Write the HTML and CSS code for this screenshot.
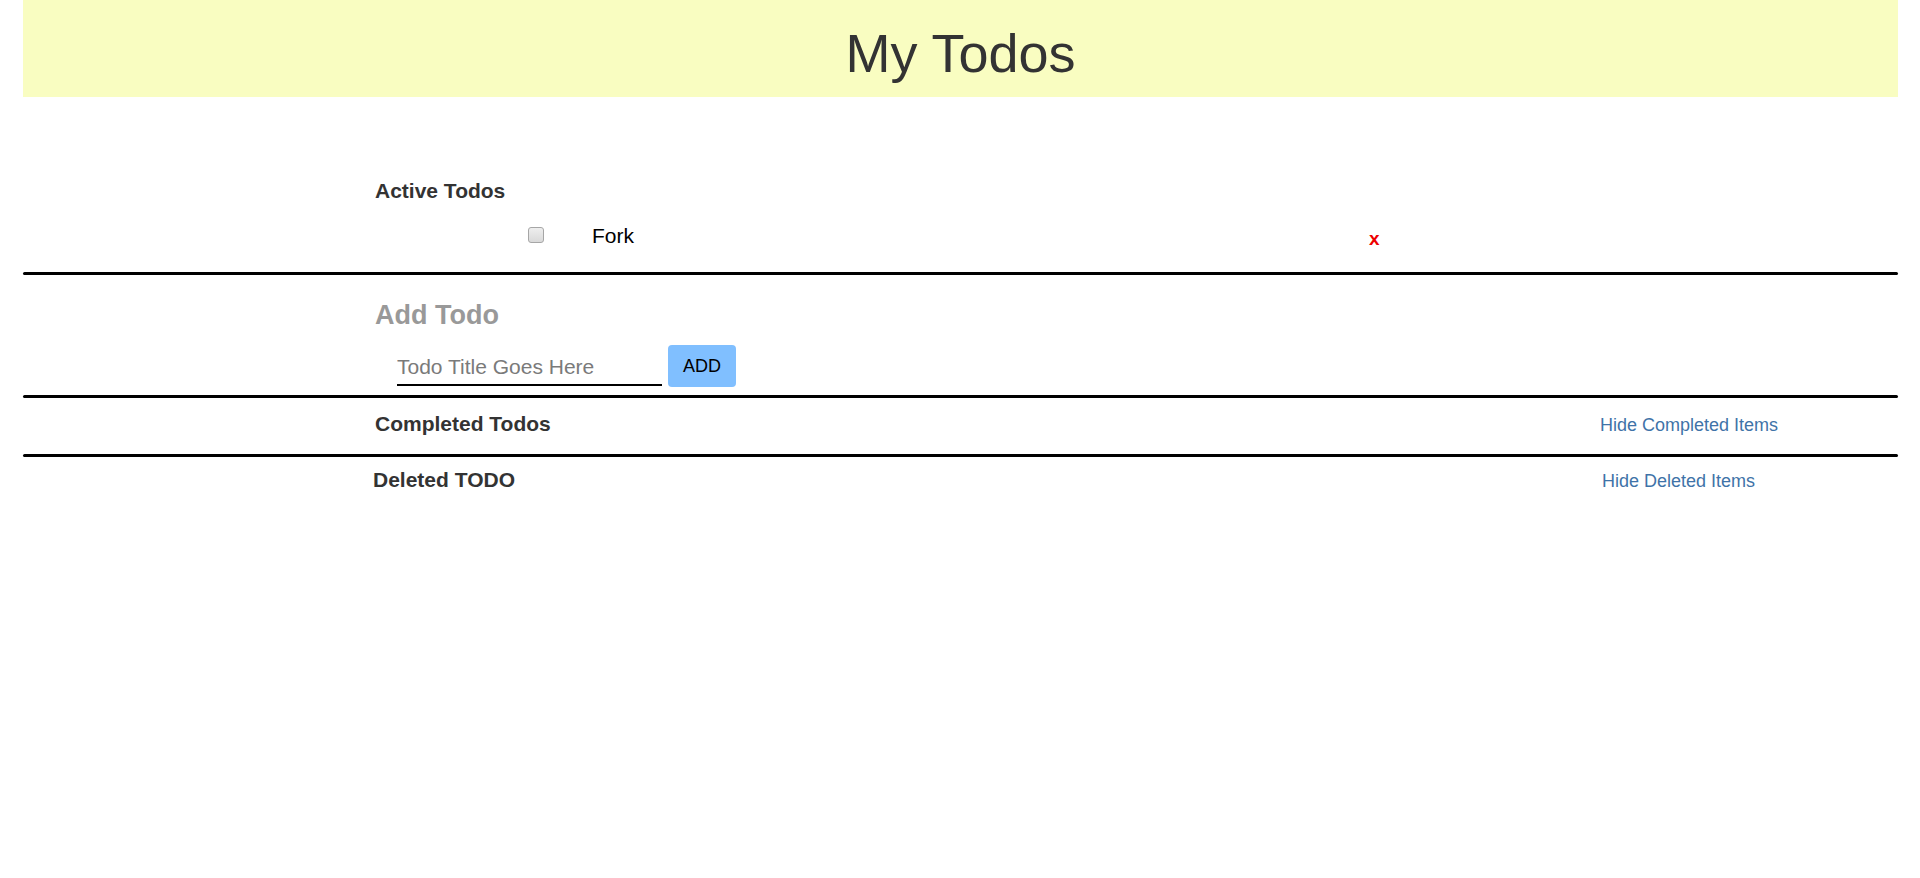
FILE: index.html
```html
<!DOCTYPE html>
<html lang="en">
<head>
<meta charset="utf-8">
<title>My Todos</title>
<link rel="stylesheet" href="styles.css">
</head>
<body>
<div class="page">
  <header class="banner">
    <h1 class="banner-title">My Todos</h1>
  </header>

  <section class="section section-active">
    <h4 class="section-title">Active Todos</h4>
    <div class="todo-row">
      <input type="checkbox" class="todo-check">
      <span class="todo-text">Fork</span>
      <span class="todo-delete">x</span>
    </div>
  </section>

  <div class="rule"></div>

  <section class="section section-add">
    <h3 class="add-title">Add Todo</h3>
    <form class="add-form">
      <input type="text" class="add-input" placeholder="Todo Title Goes Here">
      <button type="button" class="add-button">ADD</button>
    </form>
  </section>

  <div class="rule"></div>

  <section class="section section-completed">
    <div class="split-row">
      <h4 class="section-title">Completed Todos</h4>
      <a class="toggle-link" href="#">Hide Completed Items</a>
    </div>
  </section>

  <div class="rule"></div>

  <section class="section section-deleted">
    <div class="split-row split-row-deleted">
      <h4 class="section-title">Deleted TODO</h4>
      <a class="toggle-link" href="#">Hide Deleted Items</a>
    </div>
  </section>
</div>
</body>
</html>
```

FILE: styles.css
```css
* {
  box-sizing: border-box;
}

html, body {
  margin: 0;
  padding: 0;
  background: #ffffff;
}

body {
  font-family: "Liberation Sans", Arial, sans-serif;
  color: #333333;
}

.page {
  padding: 0 22px 0 23px;
}

.banner {
  background: #f9fdc1;
  height: 97px;
  padding-top: 10px;
  text-align: center;
}

.banner-title {
  margin: 0;
  font-size: 54px;
  line-height: 87px;
  font-weight: 400;
  color: #333333;
}

.section {
  padding-left: 352px;
}

.section-title {
  margin: 0;
  font-size: 21px;
  line-height: 24px;
  font-weight: 700;
  color: #333333;
}

.section-active {
  padding-top: 82px;
  padding-bottom: 24px;
}

.todo-row {
  display: flex;
  align-items: flex-start;
  margin-top: 21px;
  height: 24px;
}

.todo-check {
  appearance: none;
  -webkit-appearance: none;
  width: 16px;
  height: 16px;
  margin: 3px 0 0 153px;
  border: 1px solid #a6a6a6;
  border-radius: 3px;
  background: linear-gradient(#eeeeee, #d9d9d9);
}

.todo-text {
  margin-left: 48px;
  width: 777px;
  font-size: 21px;
  line-height: 24px;
  color: #000000;
}

.todo-delete {
  margin-top: 3px;
  font-size: 19px;
  line-height: 24px;
  font-weight: 700;
  color: #ee0000;
}

.rule {
  height: 3px;
  background: #000000;
  border-radius: 2px;
}

.section-add {
  padding-top: 25px;
  padding-bottom: 8px;
}

.add-title {
  margin: 0;
  font-size: 27px;
  line-height: 30px;
  font-weight: 700;
  color: #999999;
}

.add-form {
  display: flex;
  align-items: flex-end;
  margin-top: 15px;
}

.add-input {
  width: 265px;
  height: 36px;
  margin: 0 6px 1px 22px;
  padding: 0;
  border: none;
  border-bottom: 2px solid #000000;
  outline: none;
  background: transparent;
  font-family: "Liberation Sans", Arial, sans-serif;
  font-size: 21px;
  color: #333333;
}

.add-input::placeholder {
  color: #7a7a7a;
}

.add-button {
  width: 68px;
  height: 42px;
  padding: 0;
  border: none;
  border-radius: 4px;
  background: #80bfff;
  font-family: "Liberation Sans", Arial, sans-serif;
  font-size: 18px;
  color: #000000;
}

.split-row {
  display: grid;
  grid-template-columns: 1225px auto;
  align-items: baseline;
}

.section-completed {
  padding-top: 14px;
  padding-bottom: 17px;
}

.section-deleted {
  padding-top: 11px;
}

.split-row-deleted {
  margin-left: -2px;
  grid-template-columns: 1229px auto;
}

.toggle-link {
  font-size: 18px;
  line-height: 24px;
  color: #3f73a8;
  text-decoration: none;
}
```
